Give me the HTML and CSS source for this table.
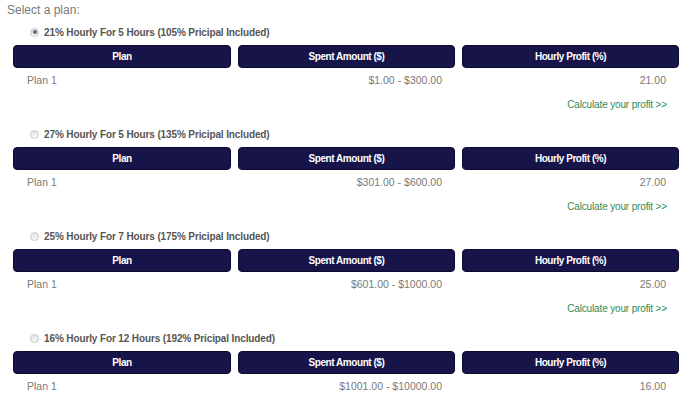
FILE: index.html
```html
<!DOCTYPE html>
<html>
<head>
<meta charset="utf-8">
<link rel="stylesheet" href="styles.css">
</head>
<body>
<div class="page">
  <div class="intro">Select a plan:</div>

  <div class="plan">
    <label class="plan-label"><span class="radio checked"></span>21% Hourly For 5 Hours (105% Pricipal Included)</label>
    <div class="grid head">
      <div class="th">Plan</div><div class="th">Spent Amount ($)</div><div class="th">Hourly Profit (%)</div>
    </div>
    <div class="grid row">
      <div class="td left">Plan 1</div><div class="td right">$1.00 - $300.00</div><div class="td right">21.00</div>
    </div>
    <div class="calc"><a>Calculate your profit &gt;&gt;</a></div>
  </div>

  <div class="plan">
    <label class="plan-label"><span class="radio"></span>27% Hourly For 5 Hours (135% Pricipal Included)</label>
    <div class="grid head">
      <div class="th">Plan</div><div class="th">Spent Amount ($)</div><div class="th">Hourly Profit (%)</div>
    </div>
    <div class="grid row">
      <div class="td left">Plan 1</div><div class="td right">$301.00 - $600.00</div><div class="td right">27.00</div>
    </div>
    <div class="calc"><a>Calculate your profit &gt;&gt;</a></div>
  </div>

  <div class="plan">
    <label class="plan-label"><span class="radio"></span>25% Hourly For 7 Hours (175% Pricipal Included)</label>
    <div class="grid head">
      <div class="th">Plan</div><div class="th">Spent Amount ($)</div><div class="th">Hourly Profit (%)</div>
    </div>
    <div class="grid row">
      <div class="td left">Plan 1</div><div class="td right">$601.00 - $1000.00</div><div class="td right">25.00</div>
    </div>
    <div class="calc"><a>Calculate your profit &gt;&gt;</a></div>
  </div>

  <div class="plan">
    <label class="plan-label"><span class="radio"></span>16% Hourly For 12 Hours (192% Pricipal Included)</label>
    <div class="grid head">
      <div class="th">Plan</div><div class="th">Spent Amount ($)</div><div class="th">Hourly Profit (%)</div>
    </div>
    <div class="grid row">
      <div class="td left">Plan 1</div><div class="td right">$1001.00 - $10000.00</div><div class="td right">16.00</div>
    </div>
    <div class="calc"><a>Calculate your profit &gt;&gt;</a></div>
  </div>
</div>
</body>
</html>
```

FILE: styles.css
```css
html, body {
  margin: 0;
  padding: 0;
  background: #ffffff;
}
body {
  font-family: "Liberation Sans", Arial, sans-serif;
  font-size: 10px;
  color: #7a7a7a;
}
.page {
  padding: 3px 11px 0 13px;
}
.intro {
  height: 19px;
  line-height: 15px;
  margin-left: -6px;
  font-size: 12px;
  color: #7a7a7a;
}
.plan {
  margin-bottom: 6px;
}
.plan-label {
  display: flex;
  align-items: center;
  height: 20px;
  padding-left: 17px;
  font-weight: bold;
  font-size: 10px;
  letter-spacing: -0.12px;
  color: #555555;
}
.radio {
  width: 7px;
  height: 7px;
  border-radius: 50%;
  border: 1px solid #c8c8c8;
  background: linear-gradient(#e2e2e2, #f8f8f8);
  margin-right: 5px;
  position: relative;
}
.radio.checked::after {
  content: "";
  position: absolute;
  left: 1.5px;
  top: 1.5px;
  width: 4px;
  height: 4px;
  border-radius: 50%;
  background: #666;
}
.grid {
  display: grid;
  grid-template-columns: 218px 217px 217px;
  column-gap: 7px;
}
.head {
  margin-top: 3px;
}
.th {
  height: 21px;
  line-height: 21px;
  background: #161449;
  border: 1px solid #0c0b2e;
  border-radius: 4px;
  color: #ffffff;
  font-weight: bold;
  font-size: 10px;
  letter-spacing: -0.45px;
  text-align: center;
}
.row {
  height: 24px;
  line-height: 24px;
  font-size: 10.5px;
}
.td.left {
  padding-left: 14px;
}
.td.right {
  text-align: right;
  padding-right: 13px;
}
.calc {
  height: 26px;
  line-height: 26px;
  text-align: right;
  padding-right: 12px;
}
.calc a {
  color: #2e8b57;
  font-size: 10px;
  letter-spacing: -0.15px;
}
```
